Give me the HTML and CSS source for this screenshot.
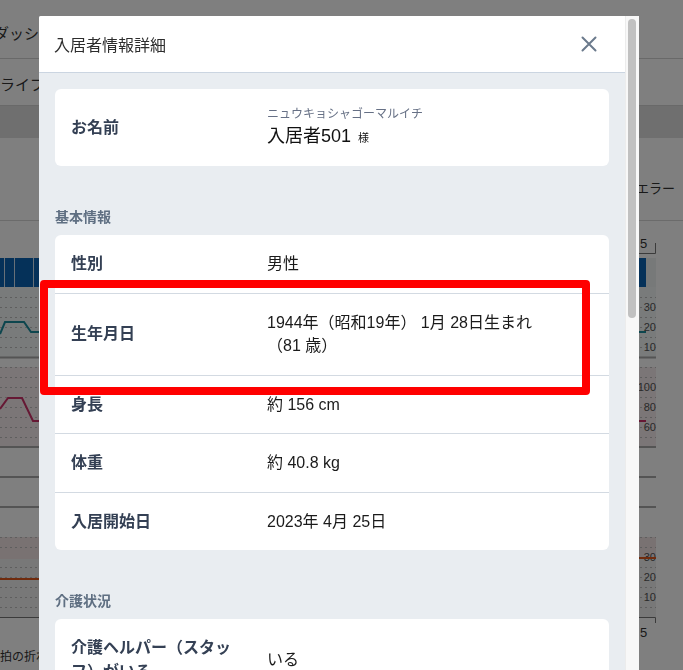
FILE: index.html
```html
<!DOCTYPE html>
<html lang="ja">
<head>
<meta charset="utf-8">
<title>入居者情報詳細</title>
<link rel="stylesheet" href="styles.css">
</head>
<body>
<div class="app">
  <header class="topbar"><span class="brand">ダッシュボード</span></header>
  <nav class="tabs"><span class="tab">ライブモニター</span></nav>
  <div class="table-head"></div>
  <div class="legend"><span class="legend-item">通信エラー</span></div>
  <svg class="charts" width="683" height="424" viewBox="0 221 683 424" xmlns="http://www.w3.org/2000/svg">
    <text x="640" y="248" class="tick-label">5</text>
    <path d="M612 253.5 H655.5 V243" class="axis-line"/>
    <rect x="0" y="258" width="646" height="29" fill="#0b63b3"/>
    <rect x="646" y="258" width="10" height="29" fill="#eef2f3"/>
    <line x1="4.5" y1="258" x2="4.5" y2="287" class="bar-sep"/>
    <line x1="14.5" y1="258" x2="14.5" y2="287" class="bar-sep"/>
    <line x1="33.5" y1="258" x2="33.5" y2="287" class="bar-sep"/>
    <rect x="0" y="287" width="656" height="70" fill="#f2f6f7"/>
    <path d="M0 297.5H656M0 307.5H656M0 317.5H656M0 327.5H656M0 337.5H656M0 347.5H656" class="grid"/>
    <line x1="0" y1="357.5" x2="656" y2="357.5" class="grid-solid"/>
    <text x="656" y="311" class="val-label">30</text>
    <text x="656" y="331" class="val-label">20</text>
    <text x="656" y="351" class="val-label">10</text>
    <polyline points="0,334 5,322 24,322 31,332 646,332" class="line-teal"/>
    <rect x="0" y="367" width="656" height="80" fill="#f7ecee"/>
    <path d="M0 367.5H656M0 377.5H656M0 387.5H656M0 397.5H656M0 407.5H656M0 417.5H656M0 427.5H656M0 437.5H656" class="grid"/>
    <text x="656" y="391" class="val-label">100</text>
    <text x="656" y="411" class="val-label">80</text>
    <text x="656" y="431" class="val-label">60</text>
    <polyline points="0,409 8,398 22,398 33,421 646,421" class="line-magenta"/>
    <line x1="0" y1="447" x2="656" y2="447" class="row-line"/>
    <line x1="0" y1="477" x2="656" y2="477" class="row-line"/>
    <line x1="0" y1="507" x2="656" y2="507" class="row-line"/>
    <rect x="0" y="537" width="656" height="22" fill="#f3e4e5"/>
    <rect x="0" y="559" width="656" height="58" fill="#f1f1f1"/>
    <path d="M0 537.5H656M0 547.5H656M0 567.5H656M0 577.5H656M0 587.5H656M0 597.5H656M0 607.5H656" class="grid"/>
    <text x="656" y="561" class="val-label">30</text>
    <text x="656" y="581" class="val-label">20</text>
    <text x="656" y="601" class="val-label">10</text>
    <polyline points="0,579 330,579 420,558 656,558" class="line-orange"/>
    <path d="M0 617.5 H655.5 V623" class="axis-line"/>
    <text x="640" y="637" class="tick-label">5</text>
  </svg>
  <p class="caption">拍の折れ線グラフ</p>
</div>

<div class="overlay">
  <div class="modal">
    <div class="modal-main">
      <div class="modal-header">
        <h2 class="modal-title">入居者情報詳細</h2>
        <button class="close-btn" type="button" aria-label="閉じる">
          <svg width="16" height="16" viewBox="0 0 16 16" xmlns="http://www.w3.org/2000/svg">
            <path d="M1.5 1.5 L14.5 14.5 M14.5 1.5 L1.5 14.5" stroke="#6b7a8c" stroke-width="2" stroke-linecap="round" fill="none"/>
          </svg>
        </button>
      </div>
      <div class="modal-body">
        <div class="card">
          <div class="row name-row">
            <div class="label">お名前</div>
            <div class="value">
              <div class="kana">ニュウキョシャゴーマルイチ</div>
              <div class="name">入居者501<span class="honorific">様</span></div>
            </div>
          </div>
        </div>

        <section class="section">
          <h3 class="section-title">基本情報</h3>
          <div class="card">
            <div class="row"><div class="label">性別</div><div class="value">男性</div></div>
            <div class="row"><div class="label">生年月日</div><div class="value">1944年（昭和19年） 1月 28日生まれ<span class="age">（81 歳）</span></div></div>
            <div class="row"><div class="label">身長</div><div class="value">約 156 cm</div></div>
            <div class="row"><div class="label">体重</div><div class="value">約 40.8 kg</div></div>
            <div class="row"><div class="label">入居開始日</div><div class="value">2023年 4月 25日</div></div>
          </div>
        </section>

        <section class="section">
          <h3 class="section-title">介護状況</h3>
          <div class="card">
            <div class="row"><div class="label">介護ヘルパー（スタッフ）がいる</div><div class="value">いる</div></div>
            <div class="row"><div class="label">要介護度</div><div class="value">要介護 2</div></div>
          </div>
        </section>
      </div>
    </div>
    <div class="scrollbar"><div class="scroll-thumb"></div></div>
  </div>
</div>

<div class="annotation"></div>
</body>
</html>
```

FILE: styles.css
```css
* { box-sizing: border-box; }

html, body {
  margin: 0;
  height: 100%;
  overflow: hidden;
}

body {
  font-family: "Liberation Sans", "Noto Sans CJK JP", sans-serif;
  color: #333;
  background: #fff;
}

/* ---------- background dashboard ---------- */
.topbar {
  height: 59px;
  border-bottom: 1px solid #d2d2d2;
  display: flex;
  align-items: center;
  padding-top: 7px;
}

.brand {
  font-size: 15px;
  margin-left: -6px;
  white-space: nowrap;
}

.tabs {
  height: 47px;
  border-bottom: 1px solid #d2d2d2;
  display: flex;
  align-items: center;
  padding-top: 2px;
}

.tab {
  font-size: 15px;
  white-space: nowrap;
}

.table-head {
  height: 32px;
  background: #dedede;
}

.legend {
  height: 83px;
  border-bottom: 1px solid #d6d6d6;
  display: flex;
  justify-content: flex-end;
  align-items: center;
  padding: 16px 8px 0 0;
}

.legend-item {
  font-size: 13px;
  white-space: nowrap;
}

.charts { display: block; }

.tick-label { font-size: 13px; fill: #333; font-family: "Liberation Sans", sans-serif; }
.val-label { font-size: 11px; fill: #555; text-anchor: end; font-family: "Liberation Sans", sans-serif; }
.axis-line { fill: none; stroke: #777; stroke-width: 1; }
.bar-sep { stroke: #cfe0f0; stroke-width: 1; }
.grid { fill: none; stroke: #bdbdbd; stroke-width: 1; stroke-dasharray: 2 3; }
.grid-solid { stroke: #a8a8a8; stroke-width: 2; }
.row-line { stroke: #a8a8a8; stroke-width: 2; }
.line-teal { fill: none; stroke: #1a8c9c; stroke-width: 2; }
.line-magenta { fill: none; stroke: #cc3068; stroke-width: 2; }
.line-orange { fill: none; stroke: #e0561a; stroke-width: 2; }

.caption {
  margin: 0;
  font-size: 12px;
  line-height: 25px;
  white-space: nowrap;
}

/* ---------- modal ---------- */
.overlay {
  position: fixed;
  inset: 0;
  background: rgba(0, 0, 0, 0.5);
  padding: 16px 0 0 39px;
  overflow: hidden;
}

.modal {
  width: 600px;
  height: 680px;
  display: flex;
  overflow: hidden;
  border-radius: 2px 0 0 0;
}

.modal-main {
  width: 586px;
  flex-shrink: 0;
  background: #e9edf1;
  overflow: hidden;
}

.scrollbar {
  width: 14px;
  flex-shrink: 0;
  background: #f8f8f8;
  border-left: 1px solid #ececec;
  padding: 3px 3px 0 2px;
}

.scroll-thumb {
  height: 299px;
  background: #c1c1c1;
  border-radius: 4px;
}

.modal-header {
  height: 57px;
  background: #fff;
  border-bottom: 1px solid #cbd5e1;
  display: flex;
  align-items: center;
  justify-content: space-between;
  padding: 0 20px 0 15px;
}

.modal-title {
  margin: 0;
  font-size: 16px;
  font-weight: 400;
  color: #2d2d2d;
}

.close-btn {
  width: 32px;
  height: 32px;
  border: 0;
  padding: 0;
  background: none;
  display: flex;
  align-items: center;
  justify-content: center;
}

.modal-body {
  padding: 16px;
}

.card {
  background: #fff;
  border-radius: 6px;
}

.row {
  display: flex;
  align-items: center;
  padding: 17px 16px;
  line-height: 23.5px;
  border-bottom: 1px solid #d3dae2;
}

.row:last-child { border-bottom: 0; }

.name-row { padding: 16px; }

.label {
  width: 172px;
  margin-right: 24px;
  flex-shrink: 0;
  font-size: 16px;
  font-weight: 700;
  color: #344054;
}

.value {
  font-size: 16px;
  color: #1b1b1b;
}

.age { display: block; }

.kana {
  font-size: 12px;
  line-height: 18px;
  height: 18px;
  color: #667085;
}

.name {
  font-size: 18px;
  line-height: 27px;
  height: 27px;
  color: #111;
}

.honorific {
  font-size: 11px;
  line-height: 1;
  margin-left: 7px;
}

.section { margin-top: 41px; }

.section-title {
  margin: 0 0 8px;
  font-size: 14px;
  line-height: 20px;
  font-weight: 700;
  color: #5f6f82;
}

/* ---------- annotation ---------- */
.annotation {
  position: absolute;
  left: 40px;
  top: 280px;
  width: 550px;
  height: 115px;
  border: 8px solid #ff0000;
  border-radius: 4px;
  z-index: 10;
  pointer-events: none;
}
```
